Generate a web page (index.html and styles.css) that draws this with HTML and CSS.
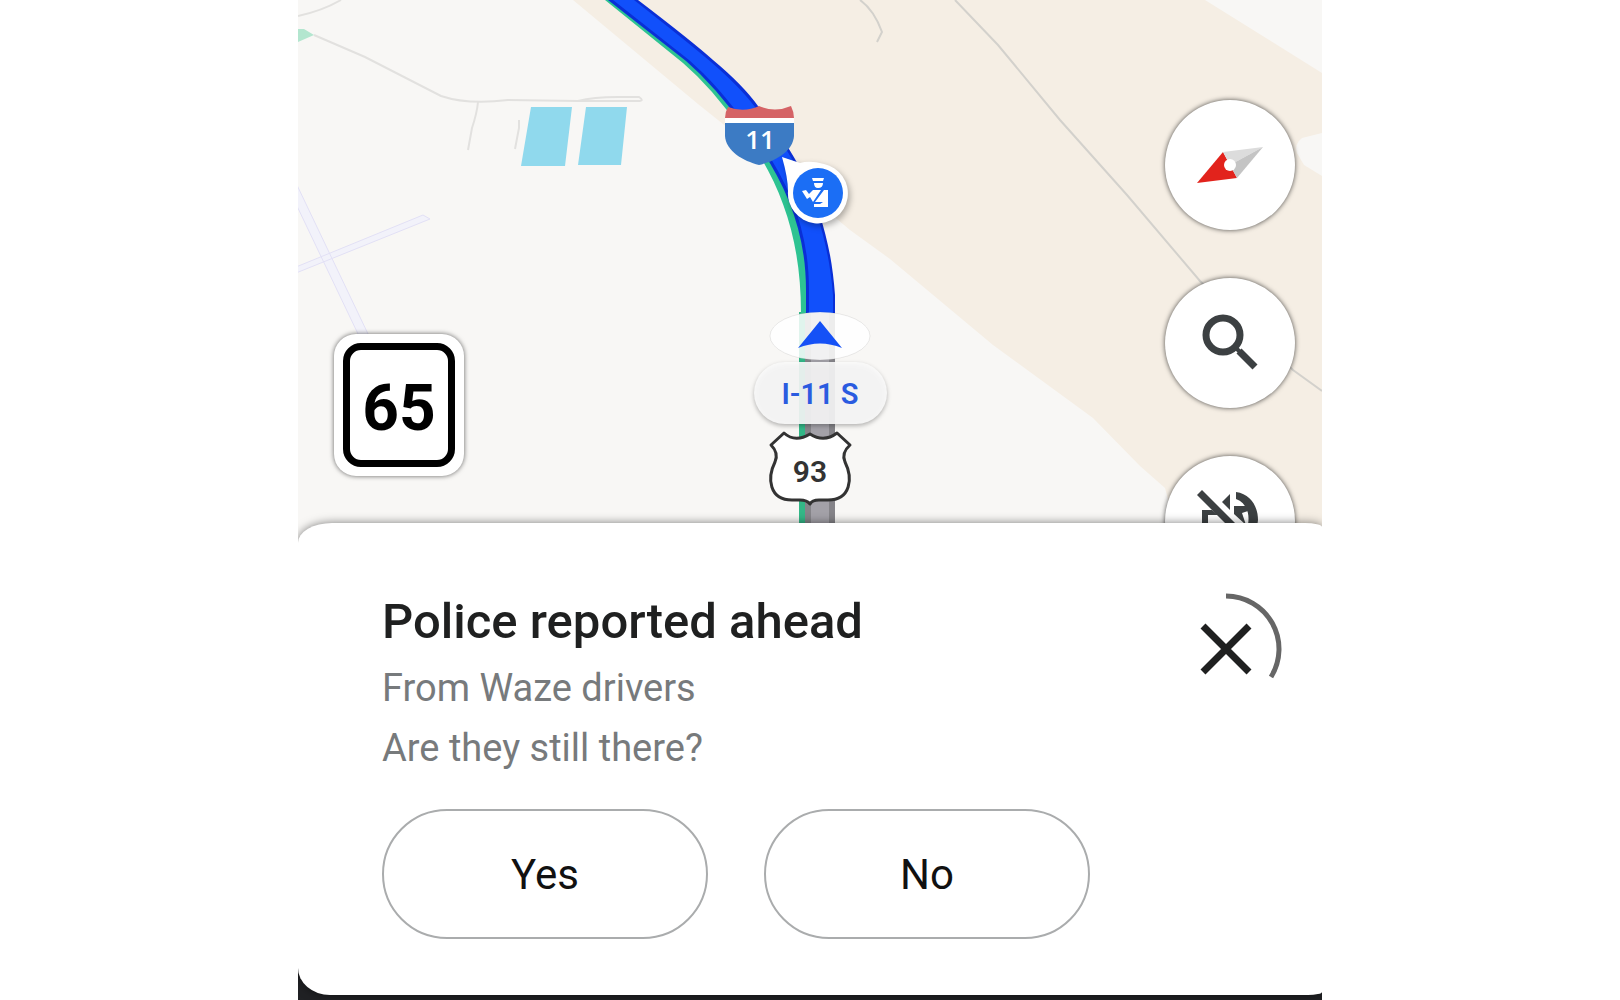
FILE: index.html
```html
<!DOCTYPE html>
<html lang="en">
<head>
  <meta charset="UTF-8">
  <meta name="viewport" content="width=device-width, initial-scale=1">
  <title>Navigation</title>
  <link rel="stylesheet" href="styles.css">
</head>
<body>
  <main class="screen">
    <section class="map">
      <svg class="map-canvas" viewBox="0 0 1024 543" preserveAspectRatio="xMidYMin slice" aria-hidden="true">
        <!-- terrain -->
        <rect width="1024" height="543" fill="#f8f7f5"/>
        <path d="M275 0 L400 104 L425 124 L552 230 L592 259 L695 345 L795 418 L842 466 L867 488 L882 543 H1024 V73 L907 0 Z" fill="#f5eee4"/>
        <path d="M1024 133 L1004 138 Q996 144 999 153 L1006 165 L1024 176 Z" fill="#f8f7f5"/>
        <path d="M0 29 L6 29 L16 35 L0 42 Z" fill="#b3e6cf"/>
        <path d="M233 107 H274 L267 166 H223 Z M288 107 H329 L323 165 H280 Z" fill="#90d9ed"/>

        <!-- runways -->
        <path d="M-2 183 L71 336 L61 336 L-2 204 Z M-2 267 L125 215 L132 219 L-2 273 Z" fill="#f2f2fa" stroke="#e2e0f5"/>

        <!-- small roads -->
        <g fill="none" stroke="#e2e1df" stroke-width="2">
          <path d="M0 16 Q24 11 43 0"/>
          <path d="M16 35 L67 57 L143 96 Q170 105 210 100 L280 101 Q295 97 320 97 H341 Q347 101 340 101 H280"/>
          <path d="M180 102 Q179 113 174 128 L170 150 M221 120 V128 L217 149"/>
        </g>
        <g fill="none" stroke="#d3d1cc" stroke-width="2">
          <path d="M562 0 Q576 10 584 32 L579 42"/>
          <path d="M657 0 L700 45 L762 120 L829 195 L902 281 L995 370 L1024 391"/>
        </g>

        <!-- road behind the car -->
        <rect x="501" y="312" width="7" height="231" fill="#33b787"/>
        <rect x="507" y="312" width="30" height="231" fill="#858489"/>
        <rect x="513" y="312" width="18" height="231" fill="#a3a1a8"/>

        <!-- route -->
        <path d="M307 0 L385 63 L399 76 Q415 92 428 109 C475 165 503 225 503 313 H515 V290 C512 220 485 165 440 108 L402 70 L318 0 Z" fill="#2ec392"/>
        <path d="M310 0 L388 61 L402 74 Q418 90 432 108 C480 165 508 220 508 290 V313 H537 V295 C531 210 500 155 460 106 Q445 85 415 60 Q395 42 340 0 Z" fill="#0a2fd6"/>
        <path d="M315 0 L391 60 L405 73 Q420 88 435 107 C484 165 511 220 511 290 V313 H535 V295 C528 210 497 155 457 107 Q442 87 413 62 Q392 44 336 0 Z" fill="#1150fb"/>

        <!-- interstate shield -->
        <path d="M430 107 Q446 113 461 106 Q477 113 493 106 Q496 112 496 118 H427 Q427 112 430 107 Z" fill="#d56366"/>
        <rect x="427" y="118" width="69" height="6" fill="#fff"/>
        <path d="M427 123 H496 V136 C495 151 478 161 461 165 C445 161 428 151 427 136 Z" fill="#3c7bc4"/>
        <text class="shield-text interstate" x="462" y="149">11</text>

        <!-- police pin -->
        <g class="pin">
          <path d="M484 157 L502 163 Q512 160 526 164 A30 30 0 1 1 490 191 Q490 178 484 157 Z" fill="#fff"/>
          <circle cx="520" cy="193" r="25" fill="#1b6ef5"/>
          <path d="M514 178 H526 L525 181 H515 Z M516 183 H525 Q525 188 520 188 Q516 188 516 183 Z" fill="#fff"/>
          <path d="M504 191 L508 190 L511 194 L515 190 H523 L515 202 L512 197 L509 199 Z M526 190 H530 V207 H516 V204 H522 L525 202 H517 Z" fill="#fff"/>
        </g>

        <!-- current position -->
        <ellipse class="puck" cx="522" cy="336" rx="50" ry="24"/>
        <path d="M522 321 L544 348 Q522 339 500 348 Z" fill="#1551f6"/>

        <rect class="road-pill" x="456" y="362" width="133" height="62" rx="31"/>
        <text class="road-name" x="522" y="404">I-11 S</text>

        <!-- US route shield -->
        <path d="M486 433 Q497 443 512 434 Q526 443 539 433 L552 445 Q543 453 547 462 C555 478 553 500 530 500 H521 Q514 500 512 504 Q509 500 502 500 H494 C471 500 469 478 477 462 Q481 453 473 445 Z" fill="#fff" stroke="#333" stroke-width="3" stroke-linejoin="round"/>
        <text class="shield-text" x="512" y="482">93</text>
      </svg>

      <div class="speed-limit">
        <span class="speed-value">65</span>
      </div>

      <div class="map-controls">
        <button class="fab" type="button" aria-label="Compass">
          <svg viewBox="0 0 72 72">
            <path d="M3 54 L29 23 L43 49 Z" fill="#e2231c"/>
            <path d="M29 23 L69 18 L36 36 Z" fill="#dcdcdc"/>
            <path d="M69 18 L43 49 L36 36 Z" fill="#c4c4c4"/>
            <circle cx="36" cy="36" r="6" fill="#fff"/>
          </svg>
        </button>
        <button class="fab" type="button" aria-label="Search">
          <svg viewBox="0 0 72 72" fill="none" stroke="#3c4042">
            <circle cx="29" cy="28" r="17" stroke-width="7"/>
            <path d="M41 40 L47 46" stroke-width="4"/>
            <path d="M45 44 L61 60" stroke-width="7"/>
          </svg>
        </button>
        <button class="fab" type="button" aria-label="Unmute">
          <svg viewBox="0 0 72 72" fill="#3c4042">
            <path d="M36 9 V25 L28 17 Z"/>
            <path d="M8 25 H18 L24 30 H14 V45 H8 Z"/>
            <path d="M3 10 L8 5 L64 61 L59 66 Z"/>
            <path d="M42 7 C57 9 64 22 64 35 L62 50 L53 44 C57 30 53 18 42 14 Z"/>
            <path d="M40 21 L53 21 L54 26 L48 28 L52 40 L40 29 Z"/>
          </svg>
        </button>
      </div>
    </section>

    <section class="sheet">
      <div class="sheet-header">
        <div class="report">
          <h1>Police reported ahead</h1>
          <p>From Waze drivers</p>
          <p>Are they still there?</p>
        </div>
        <button class="close" type="button" aria-label="Close">
          <svg viewBox="0 0 112 112" fill="none">
            <path d="M33 33 L79 79 M79 33 L33 79" stroke="#1f2020" stroke-width="7"/>
            <path d="M56 3 A53 53 0 0 1 101 84" stroke="#666" stroke-width="5"/>
          </svg>
        </button>
      </div>
      <div class="actions">
        <button class="answer" type="button">Yes</button>
        <button class="answer" type="button">No</button>
      </div>
    </section>
  </main>
</body>
</html>
```
FILE: styles.css
```css
* {
  box-sizing: border-box;
}

body {
  margin: 0;
  background: #fff;
  font-family: Roboto, "Liberation Sans", sans-serif;
  color: #1f2020;
}

button {
  font-family: inherit;
  cursor: pointer;
}

.screen {
  max-width: 1024px;
  min-height: 100vh;
  margin: 0 auto;
  overflow: hidden;
  background: #202124;
}

/* map */
.map {
  position: relative;
  display: flex;
  justify-content: space-between;
  align-items: flex-start;
  height: 543px;
  padding-left: 36px;
  padding-right: 27px;
  overflow: hidden;
}

.map-canvas {
  position: absolute;
  top: 0;
  left: 0;
  width: 100%;
  height: 100%;
}

.shield-text,
.road-name {
  font-size: 30px;
  font-weight: 600;
  text-anchor: middle;
  fill: #333;
}

.shield-text.interstate {
  font-family: "Open Sans", sans-serif;
  font-size: 26px;
  fill: #fff;
}

.road-name {
  font-size: 29px;
  fill: #2a5be0;
}

.pin {
  filter: drop-shadow(2px 3px 3px rgba(0, 0, 0, 0.3));
}

.puck {
  fill: rgba(255, 255, 255, 0.85);
  stroke: rgba(0, 0, 0, 0.08);
}

.road-pill {
  fill: rgba(249, 249, 250, 0.9);
  filter: drop-shadow(0 2px 2px rgba(0, 0, 0, 0.3));
}

.speed-limit {
  position: relative;
  width: 130px;
  height: 142px;
  margin-top: 334px;
  padding: 9px;
  border-radius: 22px;
  background: #fff;
  box-shadow: 0 0 5px rgba(0, 0, 0, 0.6);
}

.speed-value {
  display: flex;
  align-items: center;
  justify-content: center;
  height: 100%;
  padding-top: 6px;
  border: 7px solid #000;
  border-radius: 18px;
  font-size: 64px;
  font-weight: 700;
  color: #000;
}

.map-controls {
  position: relative;
  display: flex;
  flex-direction: column;
  gap: 48px;
  padding-top: 100px;
}

.fab {
  display: flex;
  align-items: center;
  justify-content: center;
  flex-shrink: 0;
  width: 130px;
  height: 130px;
  padding: 0;
  border: none;
  border-radius: 50%;
  background: #fff;
  box-shadow: 0 0 5px rgba(0, 0, 0, 0.7);
}

.fab svg {
  width: 72px;
  height: 72px;
}

/* bottom sheet */
.sheet {
  position: relative;
  margin-top: -20px;
  padding: 70px 40px 56px 84px;
  border-radius: 34px 17px 14px 32px / 20px 4px 3px 27px;
  background: #fff;
  box-shadow: 0 0 10px rgba(0, 0, 0, 0.5);
}

.sheet-header {
  display: flex;
  justify-content: space-between;
  align-items: flex-start;
}

h1 {
  margin: 0 0 8px;
  font-size: 49px;
  font-weight: 500;
  line-height: 57px;
}

p {
  margin: 0;
  font-size: 38px;
  line-height: 60px;
  color: #777a7c;
}

.close {
  flex-shrink: 0;
  width: 112px;
  height: 112px;
  padding: 0;
  border: none;
  background: none;
}

.close svg {
  display: block;
}

.actions {
  display: flex;
  gap: 56px;
  margin-top: 31px;
}

.answer {
  flex: 0 1 326px;
  height: 130px;
  border: 2px solid #aaacad;
  border-radius: 65px;
  background: #fff;
  font-size: 42px;
  color: #111;
}
```
